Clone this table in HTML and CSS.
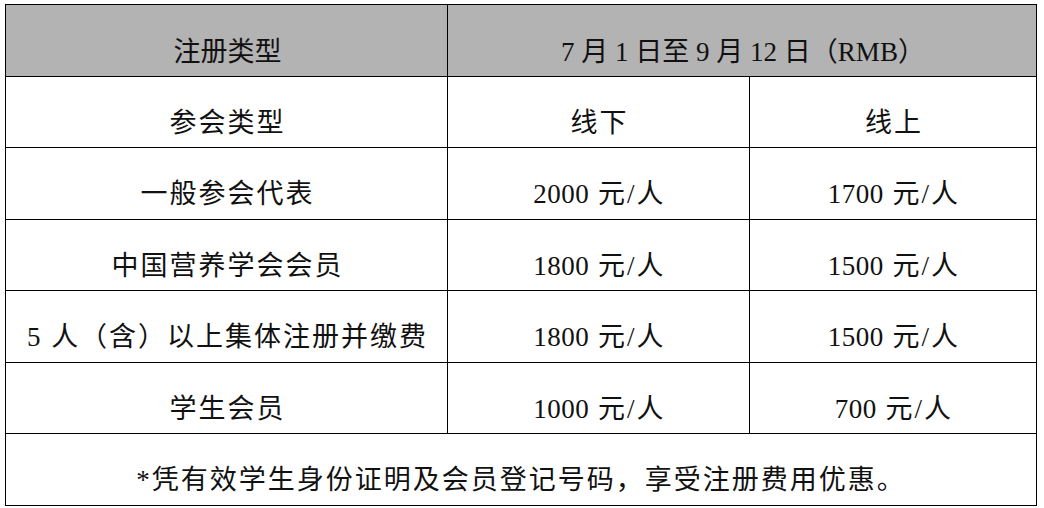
FILE: index.html
```html
<!DOCTYPE html>
<html lang="zh">
<head>
<meta charset="utf-8">
<link rel="stylesheet" href="styles.css">
</head>
<body>
<table class="fee">
  <colgroup>
    <col class="c1"><col class="c2"><col class="c3">
  </colgroup>
  <tr class="head">
    <td>注册类型</td>
    <td colspan="2">7 月 1 日至 9 月 12 日（RMB）</td>
  </tr>
  <tr>
    <td>参会类型</td>
    <td>线下</td>
    <td>线上</td>
  </tr>
  <tr>
    <td>一般参会代表</td>
    <td><span class="num">2000</span> 元/人</td>
    <td><span class="num">1700</span> 元/人</td>
  </tr>
  <tr>
    <td>中国营养学会会员</td>
    <td><span class="num">1800</span> 元/人</td>
    <td><span class="num">1500</span> 元/人</td>
  </tr>
  <tr>
    <td>5 人（含）以上集体注册并缴费</td>
    <td><span class="num">1800</span> 元/人</td>
    <td><span class="num">1500</span> 元/人</td>
  </tr>
  <tr>
    <td>学生会员</td>
    <td><span class="num">1000</span> 元/人</td>
    <td><span class="num">700</span> 元/人</td>
  </tr>
  <tr class="note">
    <td colspan="3">*凭有效学生身份证明及会员登记号码，享受注册费用优惠。</td>
  </tr>
</table>
</body>
</html>
```

FILE: styles.css
```css
html, body {
  margin: 0;
  padding: 0;
  background: #ffffff;
}
body {
  padding: 4px 0 0 5px;
  font-family: "Liberation Serif", "Noto Sans CJK SC", serif;
  color: #111111;
}
.fee {
  border-collapse: collapse;
  table-layout: fixed;
  width: 1031px;
}
.c1 { width: 442px; }
.c2 { width: 302px; }
.c3 { width: 287px; }
.fee tr { height: 71.5px; }
.fee td {
  border: 1px solid #000000;
  text-align: center;
  vertical-align: top;
  padding: 28px 0 0 2px;
  font-size: 27px;
  line-height: 36px;
  white-space: nowrap;
  font-weight: 400;
  letter-spacing: 2px;
}
.num {
  letter-spacing: 0.5px;
}
.head td {
  background: #b3b3b3;
  padding-top: 29px;
  letter-spacing: 0;
}
.note td {
  padding-left: 0;
}
```
